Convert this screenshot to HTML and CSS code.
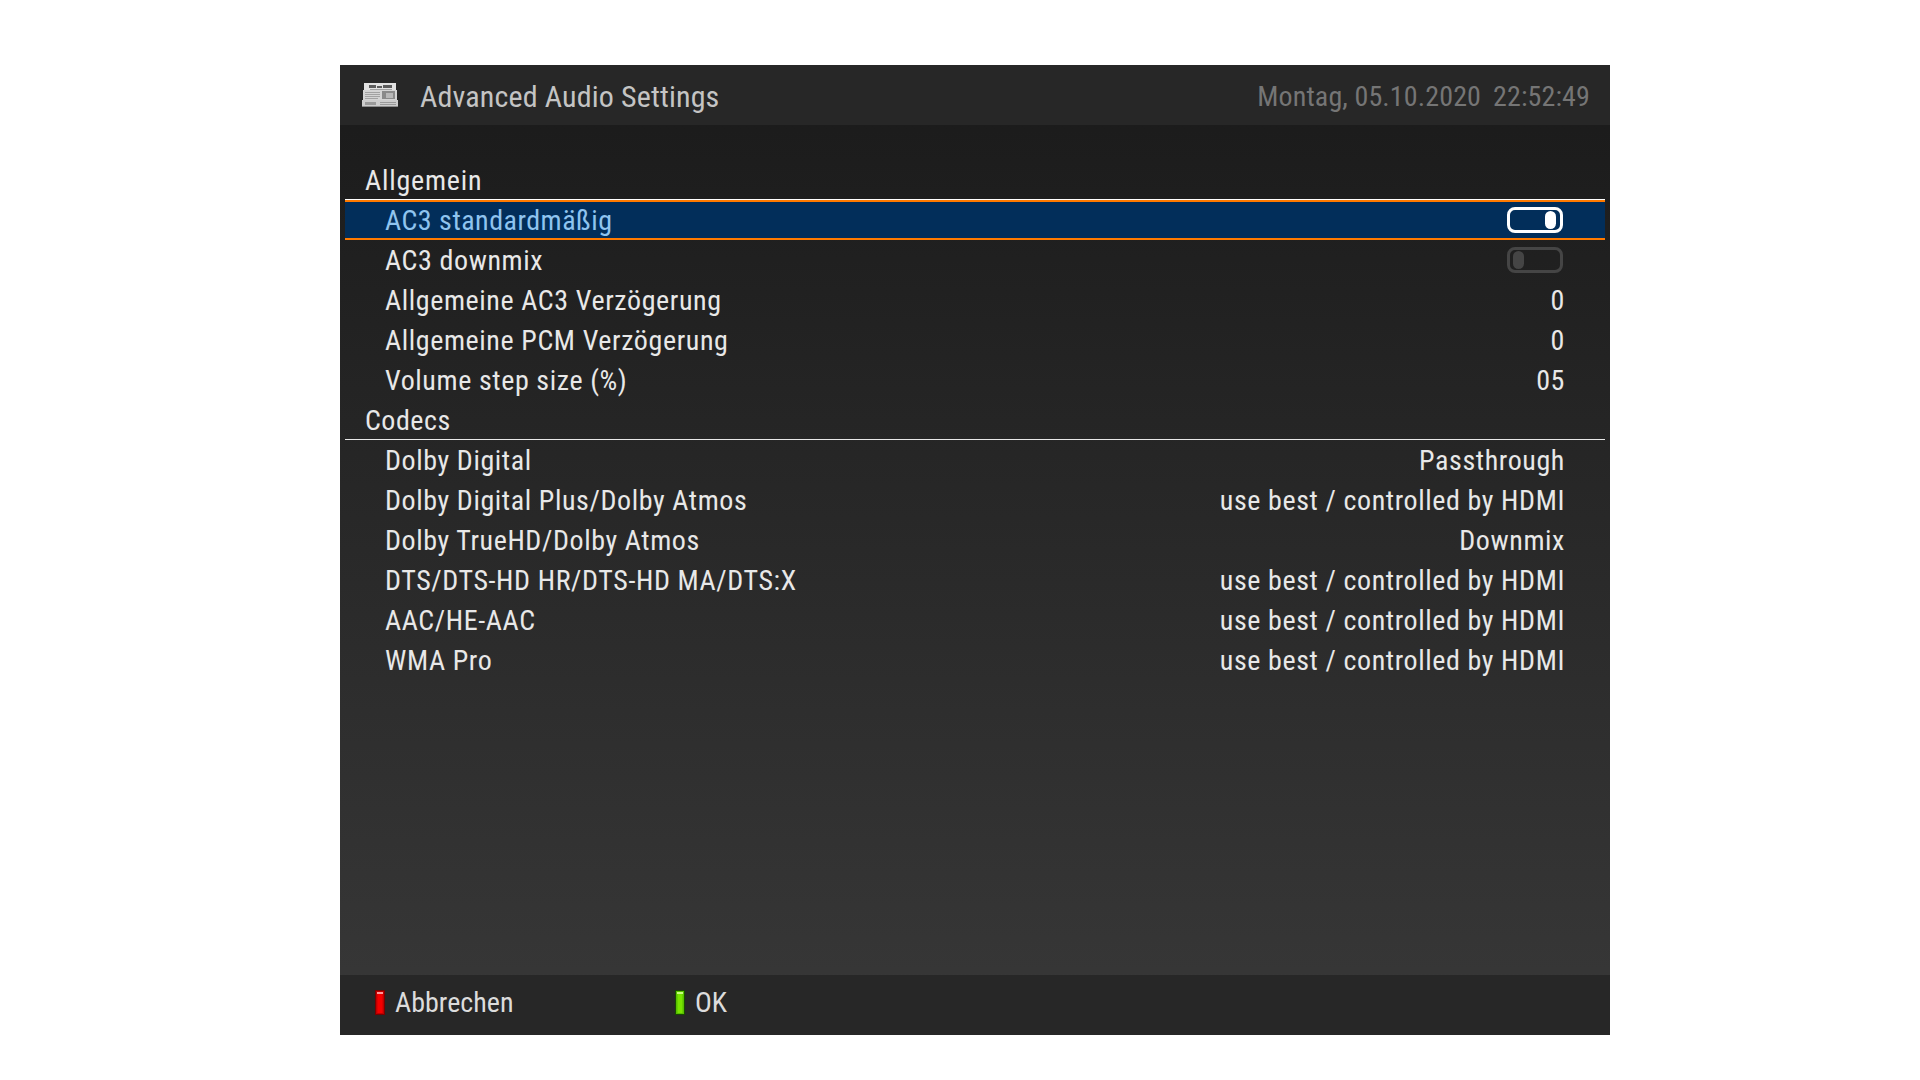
FILE: index.html
```html
<!DOCTYPE html>
<html lang="de">
<head>
<meta charset="utf-8">
<title>Advanced Audio Settings</title>
<link rel="stylesheet" href="styles.css">
</head>
<body>
<main class="panel">
  <header class="header">
    <svg class="news" width="38" height="26" viewBox="0 0 38 26" aria-hidden="true">
      <path d="M3 1h32v8H3z" fill="#e2e2e2"/>
      <path d="M8 3h7v3H8zM16 4h5v2h-5zM22 3h9v3h-9z" fill="#5c5c5c"/>
      <path d="M9 7h22v1H9z" fill="#a0a0a0"/>
      <path d="M2 8h34v10H2z" fill="#d4d4d4"/>
      <path d="M4 10h15v1H4zM4 12h15v1H4zM4 14h15v1H4zM4 16h13v1H4z" fill="#a2a2a2"/>
      <path d="M21 9h13v8H21z" fill="#8a8a8a"/>
      <path d="M25 11h7v5h-7z" fill="#b8b8b8"/>
      <path d="M1 18h36v7H1z" fill="#cdcdcd"/>
      <path d="M4 20h11v3H4zM19 20h16v1H19zM19 22h16v1H19z" fill="#9a9a9a"/>
      <path d="M1 24h36v1H1z" fill="#8c8c8c"/>
    </svg>
    <h1 class="title">Advanced Audio Settings</h1>
    <div class="clock"><span>Montag, 05.10.2020</span><span>22:52:49</span></div>
  </header>
  <section class="list">
    <div class="row section"><span>Allgemein</span></div>
    <div class="row item selected"><span>AC3 standardmäßig</span><i class="toggle on"></i></div>
    <div class="row item"><span>AC3 downmix</span><i class="toggle off"></i></div>
    <div class="row item"><span>Allgemeine AC3 Verzögerung</span><span>0</span></div>
    <div class="row item"><span>Allgemeine PCM Verzögerung</span><span>0</span></div>
    <div class="row item"><span>Volume step size (%)</span><span>05</span></div>
    <div class="row section ruled"><span>Codecs</span></div>
    <div class="row item"><span>Dolby Digital</span><span>Passthrough</span></div>
    <div class="row item"><span>Dolby Digital Plus/Dolby Atmos</span><span>use best / controlled by HDMI</span></div>
    <div class="row item"><span>Dolby TrueHD/Dolby Atmos</span><span>Downmix</span></div>
    <div class="row item"><span>DTS/DTS-HD HR/DTS-HD MA/DTS:X</span><span>use best / controlled by HDMI</span></div>
    <div class="row item"><span>AAC/HE-AAC</span><span>use best / controlled by HDMI</span></div>
    <div class="row item"><span>WMA Pro</span><span>use best / controlled by HDMI</span></div>
  </section>
  <footer class="footer">
    <div class="key"><i class="led red"></i><span>Abbrechen</span></div>
    <div class="key"><i class="led green"></i><span>OK</span></div>
  </footer>
</main>
</body>
</html>
```
FILE: styles.css
```css
* { box-sizing: border-box; }
html, body { margin: 0; height: 100%; background: #fff; }
body { padding: 65px 310px 45px 340px; font-family: Roboto, "Liberation Sans", sans-serif; font-stretch: 75%; font-size: 28px; letter-spacing: .6px; color: #e8e8e8; }
.panel { width: 1270px; height: 970px; display: flex; flex-direction: column; background: linear-gradient(#1a1a1a, #383838); }
.header { height: 60px; flex: none; display: flex; align-items: center; background: #272727; padding: 2px 20px 0 21px; }
.news { flex: none; margin: -3px 21px 0 0; }
.title { margin: 0; font: inherit; letter-spacing: .15px; font-size: 30px; color: #c4c4c4; flex: 1; }
.clock { display: flex; gap: 12px; color: #757575; letter-spacing: .12px; }
.list { flex: 1; padding: 35px 5px 0; }
.row { height: 40px; display: flex; align-items: center; justify-content: space-between; }
.section { padding-left: 20px; letter-spacing: .8px; }
.section.ruled { border-bottom: 1px solid #e8e8e8; padding-top: 1px; letter-spacing: .5px; }
.item { padding: 0 40px; }
.selected { background: #022e5a; color: #8fc4ef; border-top: 2px solid #ff7a00; border-bottom: 2px solid #ff7a00; box-shadow: 0 -1px 0 #fff; letter-spacing: .5px; }
.toggle { width: 56px; height: 26px; border-radius: 8px; border: 3px solid; display: flex; align-items: center; margin-right: 2px; }
.toggle::after { content: ""; width: 11px; height: 18px; border-radius: 6px; background: currentColor; }
.toggle.on { color: #fff; justify-content: flex-end; padding-right: 4px; }
.toggle.off { color: #454545; padding-left: 3px; }
.footer { height: 60px; flex: none; display: flex; align-items: center; background: #272727; padding: 0 0 5px 35px; letter-spacing: .03px; }
.key { width: 300px; display: flex; align-items: center; gap: 10px; color: #dcdcdc; }
.led { width: 10px; height: 25px; border: 1px solid; display: block; }
.led.red { background: #f40000; border-color: #7a0000; box-shadow: inset 0 0 0 1px #c00000, inset 0 2px 0 1px #ff9a9a, inset 2px 0 0 #e00000, inset -2px 0 0 #e00000; }
.led.green { background: #78e400; border-color: #174a00; box-shadow: inset 0 0 0 1px #58c000, inset 0 2px 0 1px #c8ff80, inset 2px 0 0 #68d000, inset -2px 0 0 #68d000; }
```
